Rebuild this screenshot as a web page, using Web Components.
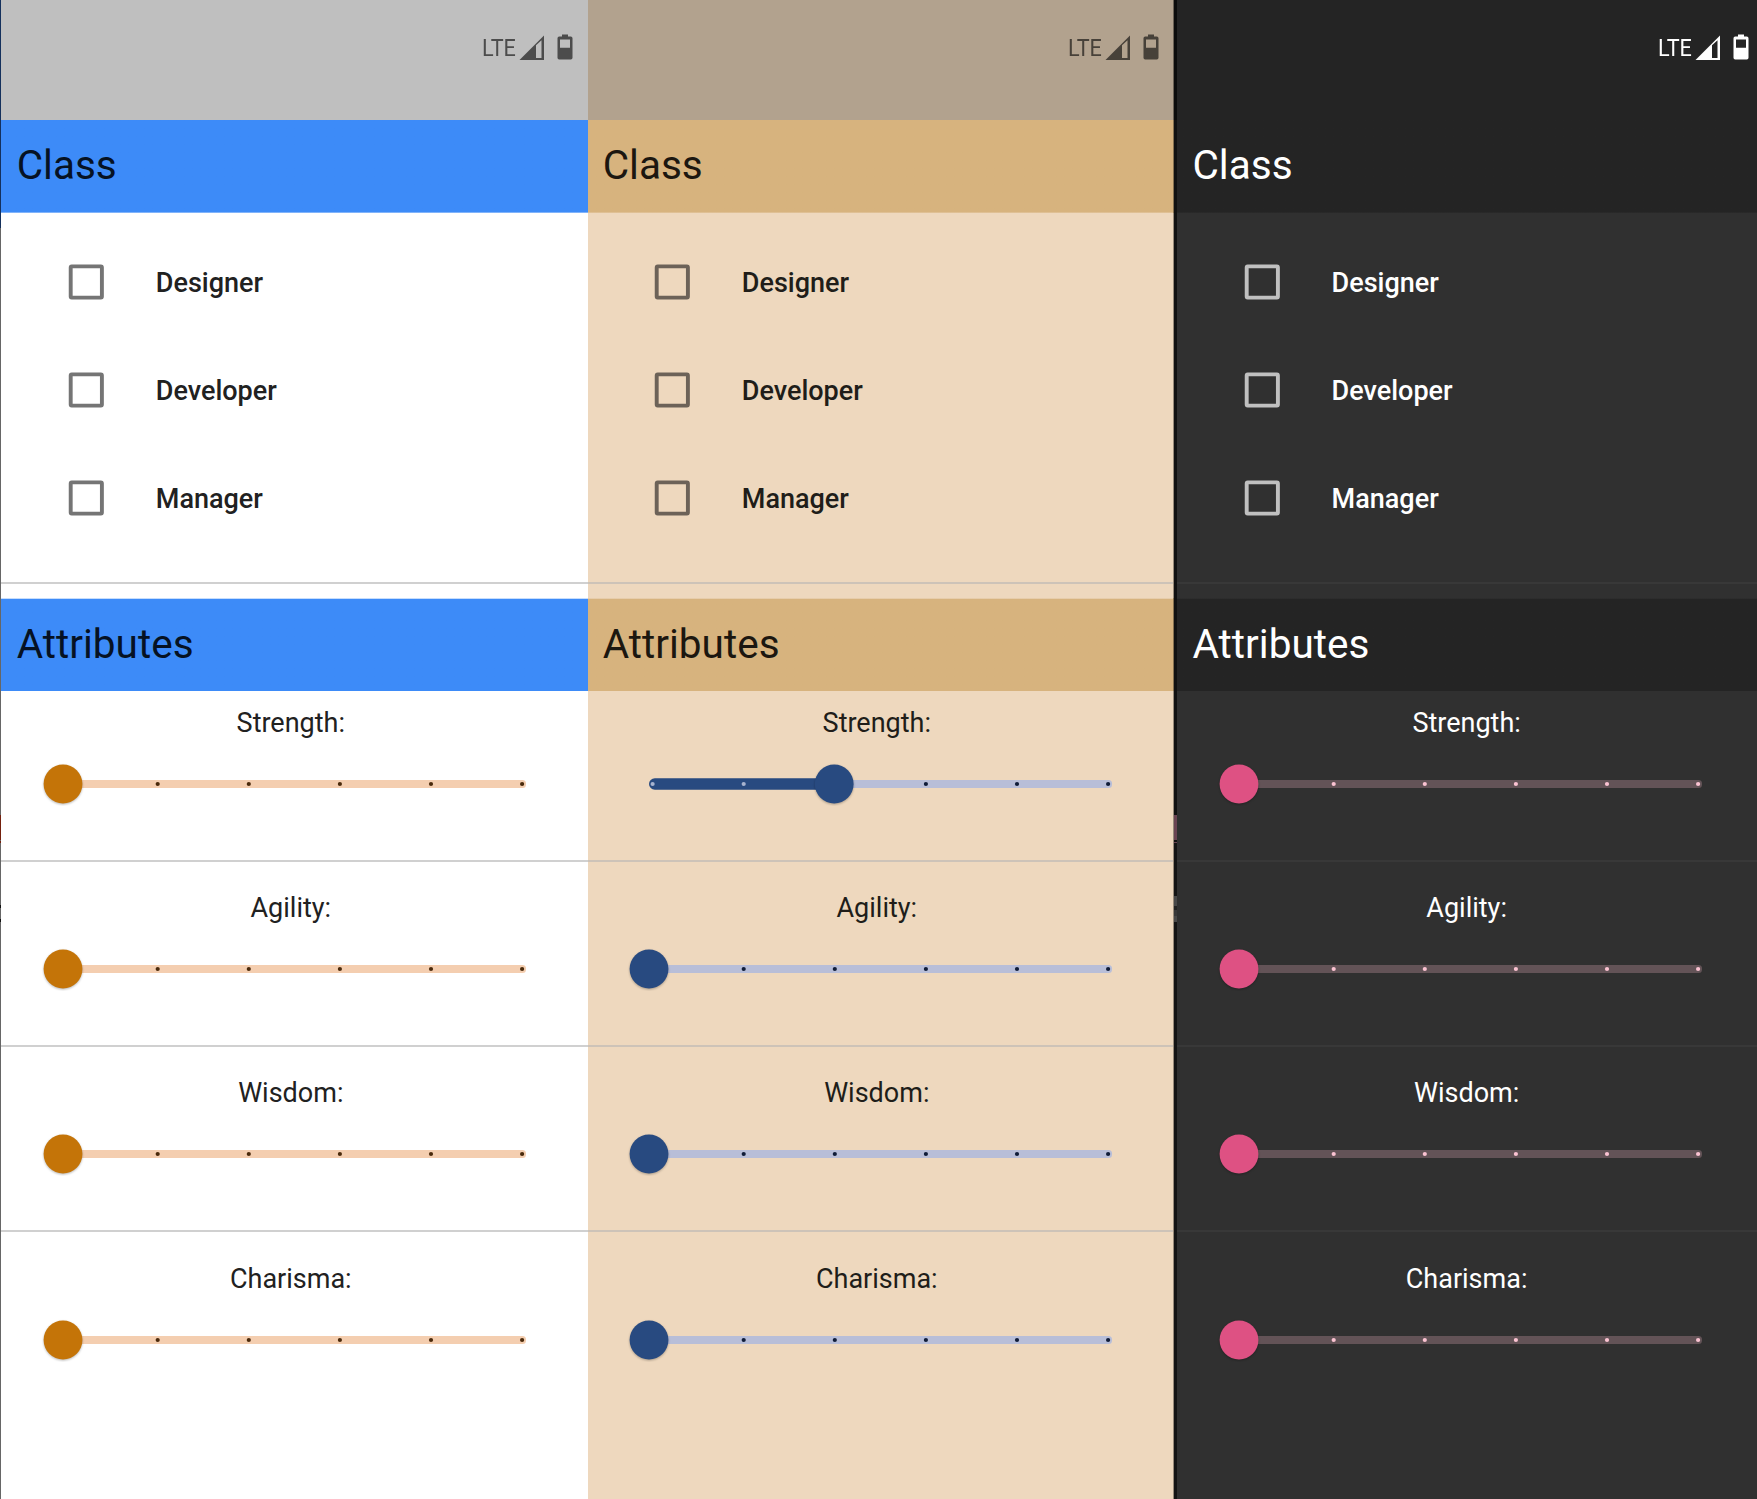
<!DOCTYPE html>
<html lang="en"><head><meta charset="utf-8"><title>Theme previews</title>
<style>
html,body{margin:0;height:100%;overflow:hidden;background:#111}
body{font-family:Roboto,sans-serif}
</style></head><body>
<theme-board></theme-board>
<script>
const define=(name,html,setup)=>customElements.define(name,class extends HTMLElement{
  connectedCallback(){
    if(this.shadowRoot)return;
    const t=document.createElement('template');t.innerHTML=html;
    const c=t.content;
    if(setup)setup(this,c);
    this.attachShadow({mode:'open'}).appendChild(c.cloneNode(true));
  }
});

define('status-bar',`<style>
:host{display:flex;height:120px;box-sizing:border-box;background:var(--status);color:var(--status-ink);padding:34px 0 0 var(--status-x,481.6px);align-items:flex-start}
span{display:block;font-size:24px;line-height:28px;width:37px;white-space:nowrap}
.t{transform-origin:0 50%;transform:scaleX(.9)}
svg{display:block;fill:currentColor}
.sig{margin:1px 13px 0 0}
</style><span class="t">LTE</span>
<svg class="sig" width="25" height="26" viewBox="0 0 25 26"><path fill-rule="evenodd" d="M.5 25L25 .5V25ZM17 10.3V23H22.5V5.3Z"/></svg>
<svg class="bat" width="16" height="26" viewBox="0 0 16 26"><path fill-rule="evenodd" d="M5 .5H11V2.5H13.8Q15.5 2.5 15.5 4.2V23.8Q15.5 25.5 13.8 25.5H2.2Q.5 25.5 .5 23.8V4.2Q.5 2.5 2.2 2.5H5ZM3 5.5V13.7H13V5.5Z"/></svg>`);

define('section-header',`<style>
:host{display:flex;align-items:center;box-sizing:border-box;height:93px;padding:0 0 2.6px 16.7px;background:linear-gradient(var(--bar) 92px,color-mix(in srgb,var(--bar) 65%,var(--page)) 92px);color:var(--bar-ink);font-size:40.5px}
:host([second]){padding-bottom:1.7px;background:linear-gradient(color-mix(in srgb,var(--bar) 30%,var(--page)) 1px,var(--bar) 1px)}
</style><slot></slot>`);

define('check-row',`<style>
:host{display:flex;align-items:center;height:108px;padding-left:68px;color:var(--ink);font-size:27px;font-weight:500}
svg{display:block;margin-right:51.8px}
rect{fill:none;stroke:var(--box);stroke-width:3.9px}
span{padding-top:1.4px}
</style><svg width="36" height="36" viewBox="0 0 36 36"><rect x="2.7" y="2.4" width="31.2" height="31.2" rx="1"/></svg><span><slot></slot></span>`);

define('step-slider',`<style>
:host{display:block;height:44px}
svg{display:block}
</style><div></div>`,(el,root)=>{
  const v=+el.getAttribute('value')||0,step=91.1,x0=66.6,y=22;
  const cx=v?x0+v*step-.6:63;
  let s=`<svg width="580" height="44" viewBox="0 0 580 44"><rect x="${cx}" y="18" width="${526-cx}" height="8" rx="3.5" style="fill:var(--track)"/>`;
  if(v)s+=`<rect x="63" y="16.2" width="${cx-63}" height="11.6" rx="5.8" style="fill:var(--thumb)"/>`;
  for(let i=0;i<6;i++)s+=`<circle cx="${x0+i*step}" cy="${y}" r="2.1" style="fill:var(${i<v?'--tick-on':'--tick'})"/>`;
  s+=`<circle cx="${cx}" cy="${y}" r="19.4" style="fill:var(--thumb);filter:drop-shadow(0 1px 1px rgba(0,0,0,.28))"/></svg>`;
  root.querySelector('div').innerHTML=s;
});

define('attribute-row',`<style>
:host{display:flex;flex-direction:column;box-sizing:border-box;height:185.2px;color:var(--ink);font-size:27px;border-bottom:2px solid var(--line)}
:host([last]){border-color:transparent}
div{height:32px;line-height:32px;text-align:center;width:581.6px;margin:30.6px 0 22.9px}
</style><div><slot></slot></div><step-slider></step-slider>`,(el,root)=>{
  root.querySelector('step-slider').setAttribute('value',el.getAttribute('value')||0);
});

define('theme-panel',`<style>
:host{display:block;box-sizing:border-box;overflow:hidden;background:var(--page);height:100%}
.in{width:600px;margin-left:var(--shift,0)}
.list{box-sizing:border-box;height:371px;padding-top:15px;border-bottom:2px solid var(--line);margin-bottom:14px}
.attrs{margin-top:-14.5px}
section-header{position:relative;z-index:1}
</style><div class="in"><status-bar></status-bar>
<section-header>Class</section-header>
<div class="list"><check-row>Designer</check-row><check-row>Developer</check-row><check-row>Manager</check-row></div>
<section-header second>Attributes</section-header>
<div class="attrs"><attribute-row class="first">Strength:</attribute-row><attribute-row>Agility:</attribute-row><attribute-row>Wisdom:</attribute-row><attribute-row last>Charisma:</attribute-row></div></div>`,(el,root)=>{
  root.querySelector('.first').setAttribute('value',el.getAttribute('strength')||0);
});

define('edge-strip',`<style>
:host{display:block;height:100%;background:var(--edge)}
</style>`);

define('theme-board',`<style>
:host{display:grid;grid-template-columns:1px 587px 585px 1px 3px 580px;width:1757px;height:1499px}
.light{--shift:-1px;--page:#fff;--status:#bfbfbf;--status-ink:#4c4c4c;--bar:#3d8bf8;--bar-ink:#061223;--ink:#212121;--box:#757575;--line:#d0d0d0;--track:#f4ceb0;--thumb:#c47408;--tick:#4a2a0c;--tick-on:#fff}
.tan{--shift:-2px;--page:#eed8be;--status:#b2a28e;--status-ink:#474139;--bar:#d7b37e;--bar-ink:#1c1710;--ink:#201d19;--box:#6c6258;--line:#cdc3b8;--track:#b8bed8;--thumb:#284a80;--tick:#101c38;--tick-on:#a7b3cf}
.dark{--shift:-1.2px;--status-x:482.6px;--page:#303030;--status:#242424;--status-ink:#fff;--bar:#242424;--bar-ink:#fff;--ink:#fff;--box:#c0c0c0;--line:#383838;--track:#635357;--thumb:#de5183;--tick:#fbc3d2}
.a{--edge:linear-gradient(#14305c 228px,#666 228px 815px,#74200d 815px 840px,#666 840px 841px,#74200d 841px 843px,#666 843px 905px,#111 905px 908px,#666 908px 919px,#111 919px 922px,#666 922px)}
.m{--edge:linear-gradient(#6b6155 120px,#86704f 120px 213px,#988a79 213px 598px,#86704f 598px 691px,#988a79 691px)}
.b{--edge:linear-gradient(#0c0c0c 120px,#111 120px 815px,#6a4452 815px 840px,#111 840px 842px,#6a4452 842px 843px,#141414 843px 896px,#484848 896px 906px,#222 906px 910px,#383838 910px 916px,#484848 916px 922px,#141414 922px)}
</style><edge-strip class="a"></edge-strip><theme-panel class="light"></theme-panel><theme-panel class="tan" strength="2"></theme-panel><edge-strip class="m"></edge-strip><edge-strip class="b"></edge-strip><theme-panel class="dark"></theme-panel>`);
</script></body></html>
